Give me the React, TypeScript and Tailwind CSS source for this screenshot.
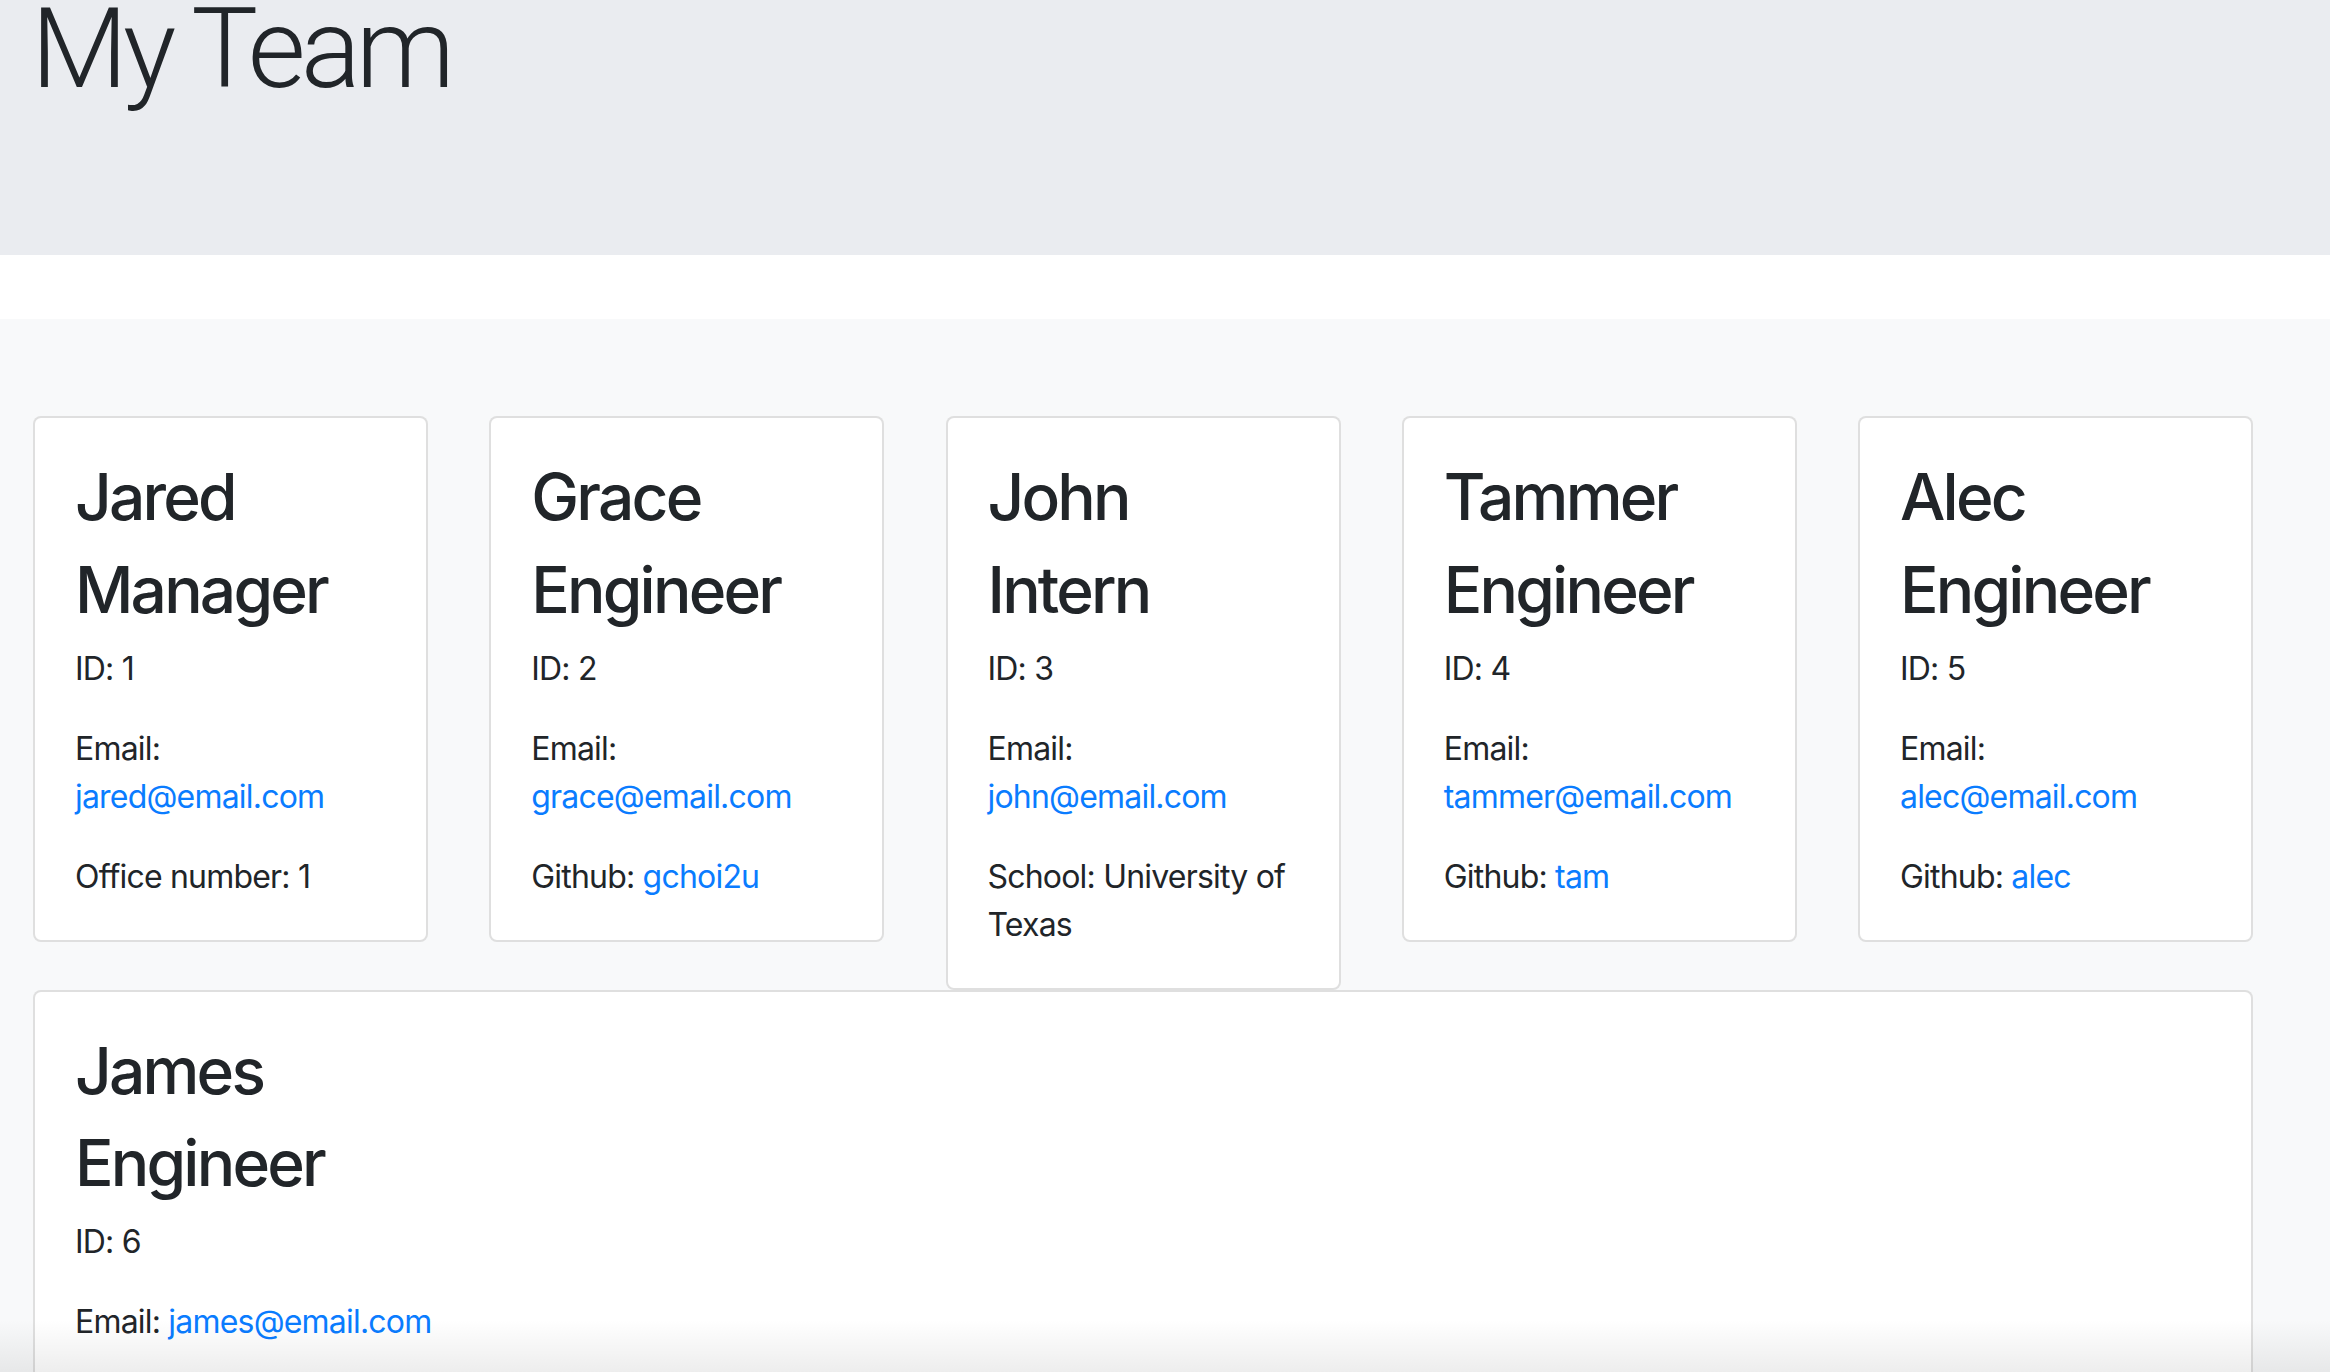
import React from "react";

type Member = {
  name: string;
  role: string;
  id: number;
  email: string;
  extra: { label: string; value: string; link?: boolean };
};

const team: Member[] = [
  { name: "Jared", role: "Manager", id: 1, email: "jared@email.com", extra: { label: "Office number", value: "1" } },
  { name: "Grace", role: "Engineer", id: 2, email: "grace@email.com", extra: { label: "Github", value: "gchoi2u", link: true } },
  { name: "John", role: "Intern", id: 3, email: "john@email.com", extra: { label: "School", value: "University of Texas" } },
  { name: "Tammer", role: "Engineer", id: 4, email: "tammer@email.com", extra: { label: "Github", value: "tam", link: true } },
  { name: "Alec", role: "Engineer", id: 5, email: "alec@email.com", extra: { label: "Github", value: "alec", link: true } },
];

const heading = "text-[64px] leading-[76.8px] font-medium tracking-[-2.8px] mb-[16px]";

function MemberCard({ m }: { m: Member }) {
  return (
    <div className="bg-white border-2 border-[rgba(0,0,0,0.125)] rounded-[8px] px-[40px] pt-[41px] pb-[39px]">
      <h2 className={heading}>{m.name}</h2>
      <h2 className={heading}>{m.role}</h2>
      <p className="mb-[32px]">ID: {m.id}</p>
      <p className="mb-[32px]">
        Email: <a className="text-[#0a7cff]">{m.email}</a>
      </p>
      <p>
        {m.extra.label}:{" "}
        {m.extra.link ? <a className="text-[#0a7cff]">{m.extra.value}</a> : m.extra.value}
      </p>
    </div>
  );
}

export default function App() {
  return (
    <div
      className="relative h-screen overflow-hidden bg-white text-[#212529] text-[32px] leading-[48px] tracking-[-0.8px]"
      style={{ fontFamily: "Inter, 'Noto Sans', sans-serif" }}
    >
      {/* Jumbotron */}
      <div className="h-[255px] bg-[#eaecf0] pl-[31px]">
        <h1
          className="text-[112px] leading-[98px] font-light tracking-[-5px]"
          style={{ fontFamily: "Roboto, 'Liberation Sans', sans-serif" }}
        >
          My Team
        </h1>
      </div>

      <div className="h-[64px] bg-white" />

      {/* Cards */}
      <div className="bg-[#f8f9fa] pt-[97px] pl-[33px] h-full">
        <div className="grid grid-cols-[repeat(5,395px)] gap-x-[61.25px] gap-y-0 items-start">
          {team.map((m) => (
            <MemberCard key={m.id} m={m} />
          ))}
          <div className="col-span-5 bg-white border-2 border-[rgba(0,0,0,0.125)] rounded-[8px] px-[40px] pt-[41px] pb-[39px]">
            <h2 className={heading}>James</h2>
            <h2 className={heading}>Engineer</h2>
            <p className="mb-[32px]">ID: 6</p>
            <p className="mb-[32px]">
              Email: <a className="text-[#0a7cff]">james@email.com</a>
            </p>
          </div>
        </div>
      </div>

      {/* bottom fade */}
      <div className="pointer-events-none absolute bottom-0 left-0 right-0 h-[52px] bg-linear-to-b from-transparent to-black/[0.07]" />
    </div>
  );
}
